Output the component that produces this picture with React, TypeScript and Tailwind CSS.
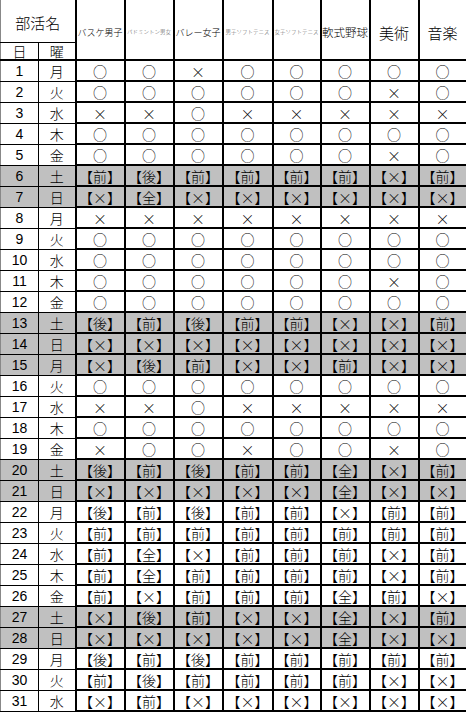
const clubs = [
  { name: "バスケ男子", cls: "text-[9px] text-black" },
  { name: "バドミントン男女", cls: "text-[5.5px] text-[#555]" },
  { name: "バレー女子", cls: "text-[9px] text-black" },
  { name: "男子ソフトテニス", cls: "text-[5.5px] text-[#555]" },
  { name: "女子ソフトテニス", cls: "text-[5.5px] text-[#555]" },
  { name: "軟式野球", cls: "text-[11.5px] text-black" },
  { name: "美術", cls: "text-[15px] text-black" },
  { name: "音楽", cls: "text-[15px] text-black" },
];

const week = ["月", "火", "水", "木", "金", "土", "日"];

// o = ○, x = ×, 前/後/全/X = 【..】
const rows: string[] = [
  "o o x o o o o o",
  "o o o o o o x o",
  "x x o x x x x x",
  "o o o o o o o o",
  "o o o o o o x o",
  "前 後 前 前 前 前 X 前",
  "X 全 X X X X X X",
  "x x x x x x x x",
  "o o o o o o o o",
  "o o o o o o o o",
  "o o o o o o x o",
  "o o o o o o o o",
  "後 前 後 前 前 X X 前",
  "X X X X X X X X",
  "X 後 前 X X 前 X X",
  "o o o o o o o o",
  "x x o x x x x x",
  "o o o o o o o o",
  "x o o x o o x o",
  "後 前 後 前 前 全 X 前",
  "X X X X X 全 X X",
  "後 前 後 前 前 X 前 前",
  "前 前 前 前 前 前 前 前",
  "前 全 X 前 前 前 X 前",
  "前 全 前 前 前 前 X 前",
  "前 X 前 前 前 全 前 X",
  "X 後 前 X X 全 X 前",
  "X X X X X 全 X X",
  "後 前 後 前 前 前 前 前",
  "前 後 前 前 前 前 X X",
  "X 前 X X X X X X",
];

const shaded = new Set([6, 7, 13, 14, 15, 20, 21, 27, 28]);

function mark(v: string) {
  if (v === "o") return "○";
  if (v === "x") return "×";
  if (v === "X") return "【×】";
  return `【${v}】`;
}

export default function App() {
  return (
    <div className="w-[466px] h-[712px] overflow-hidden bg-white font-['Noto_Sans_CJK_JP',sans-serif] font-light text-black">
      <table className="w-[466px] table-fixed border-collapse">
        <colgroup>
          <col className="w-[38px]" />
          <col className="w-[37px]" />
          <col className="w-[49px]" />
          <col className="w-[49px]" />
          <col className="w-[49px]" />
          <col className="w-[50px]" />
          <col className="w-[48px]" />
          <col className="w-[49px]" />
          <col className="w-[49px]" />
          <col className="w-[48px]" />
        </colgroup>
        <thead>
          <tr className="h-[42px]">
            <th
              colSpan={2}
              className="border-t-0 border-l border-l-[#888] border-b border-b-black border-r-2 border-r-black pt-[3px] text-[15px] font-light leading-none"
            >
              部活名
            </th>
            {clubs.map((c) => (
              <th
                key={c.name}
                rowSpan={2}
                className={`border-2 border-t-0 border-black pt-[6px] font-light leading-none whitespace-nowrap ${c.cls}`}
              >
                {c.name}
              </th>
            ))}
          </tr>
          <tr className="h-[18px]">
            <th className="border-l border-l-[#888] border-r border-r-black border-b-2 border-b-black text-[14px] font-light leading-none">
              日
            </th>
            <th className="border-l border-l-black border-r-2 border-r-black border-b-2 border-b-black text-[14px] font-light leading-none">
              曜
            </th>
          </tr>
        </thead>
        <tbody>
          {rows.map((r, i) => {
            const day = i + 1;
            const bg = shaded.has(day) ? "bg-[#c0c0c0]" : "bg-white";
            return (
              <tr key={day} className={`h-[21px] ${bg}`}>
                <td className="border-l border-l-[#888] border-r border-r-black border-y border-y-black text-center text-[14px] font-normal leading-none font-['Liberation_Sans',sans-serif]">
                  {day}
                </td>
                <td className="border-l border-l-black border-r-2 border-r-black border-y border-y-black text-center text-[14px] leading-none">
                  {week[i % 7]}
                </td>
                {r.split(" ").map((v, j) => (
                  <td
                    key={j}
                    className="border-2 border-black text-center text-[14px] leading-none whitespace-nowrap"
                  >
                    {mark(v)}
                  </td>
                ))}
              </tr>
            );
          })}
        </tbody>
      </table>
    </div>
  );
}
